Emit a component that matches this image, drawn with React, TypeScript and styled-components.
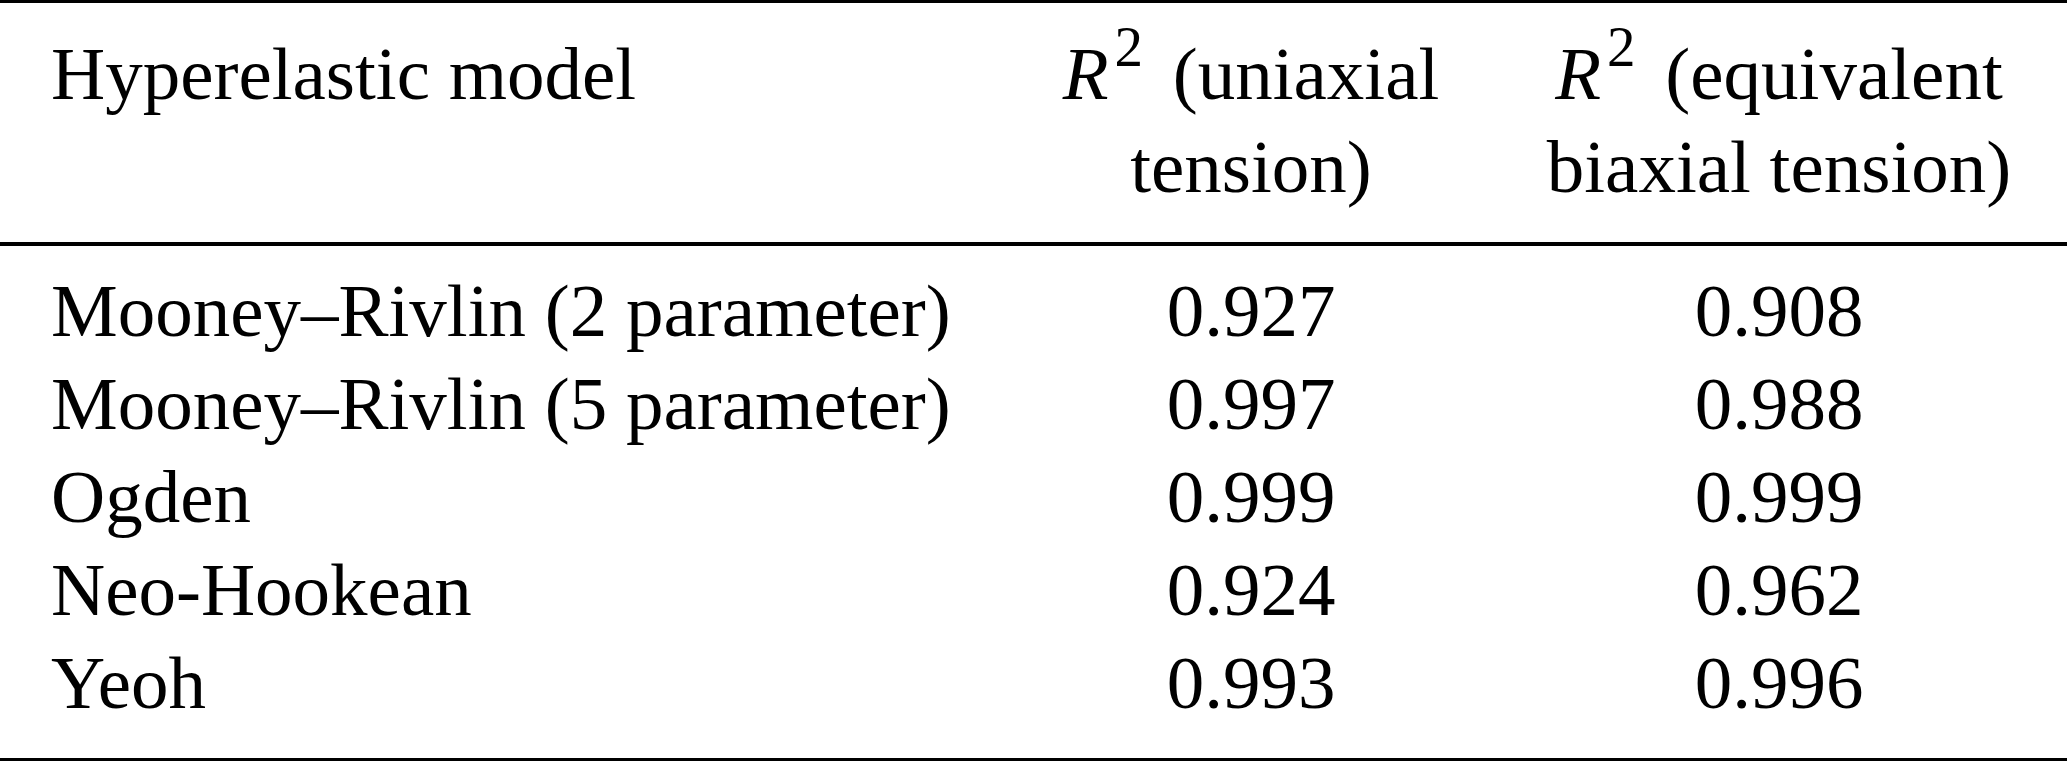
import React from "react";
import styled, { createGlobalStyle } from "styled-components";

const GlobalStyle = createGlobalStyle`
  html, body {
    margin: 0;
    padding: 0;
    background: #fff;
    overflow: hidden;
  }
`;

const Table = styled.div`
  width: 2067px;
  font-family: "Liberation Serif", "Times New Roman", serif;
  font-size: 75px;
  line-height: 93px;
  color: #000;
  border-top: 3px solid #000;
  border-bottom: 3px solid #000;
`;

const Head = styled.div`
  padding: 24px 0 29px;
  border-bottom: 4px solid #000;
`;

const Body = styled.div`
  padding: 18px 0 29px;
`;

const Row = styled.div`
  display: grid;
  grid-template-columns: 1fr 468px 468px;
  column-gap: 60px;
  padding: 0 54px 0 51px;
  align-items: start;
`;

const Cell = styled.div<{ $center?: boolean }>`
  white-space: nowrap;
  text-align: ${(p) => (p.$center ? "center" : "left")};
`;

const Var = styled.i`
  font-style: italic;
`;

const Sup = styled.span`
  font-size: 57px;
  line-height: 0;
  vertical-align: 33px;
  margin: 0 11px 0 6px;
`;

const rows: [string, string, string][] = [
  ["Mooney–Rivlin (2 parameter)", "0.927", "0.908"],
  ["Mooney–Rivlin (5 parameter)", "0.997", "0.988"],
  ["Ogden", "0.999", "0.999"],
  ["Neo-Hookean", "0.924", "0.962"],
  ["Yeoh", "0.993", "0.996"],
];

function RSquared() {
  return (
    <>
      <Var>R</Var>
      <Sup>2</Sup>
    </>
  );
}

export default function App() {
  return (
    <>
      <GlobalStyle />
      <Table>
        <Head>
          <Row>
            <Cell>Hyperelastic model</Cell>
            <Cell $center>
              <RSquared /> (uniaxial
              <br />
              tension)
            </Cell>
            <Cell $center>
              <RSquared /> (equivalent
              <br />
              biaxial tension)
            </Cell>
          </Row>
        </Head>
        <Body>
          {rows.map(([model, uni, bi]) => (
            <Row key={model}>
              <Cell>{model}</Cell>
              <Cell $center>{uni}</Cell>
              <Cell $center>{bi}</Cell>
            </Row>
          ))}
        </Body>
      </Table>
    </>
  );
}
